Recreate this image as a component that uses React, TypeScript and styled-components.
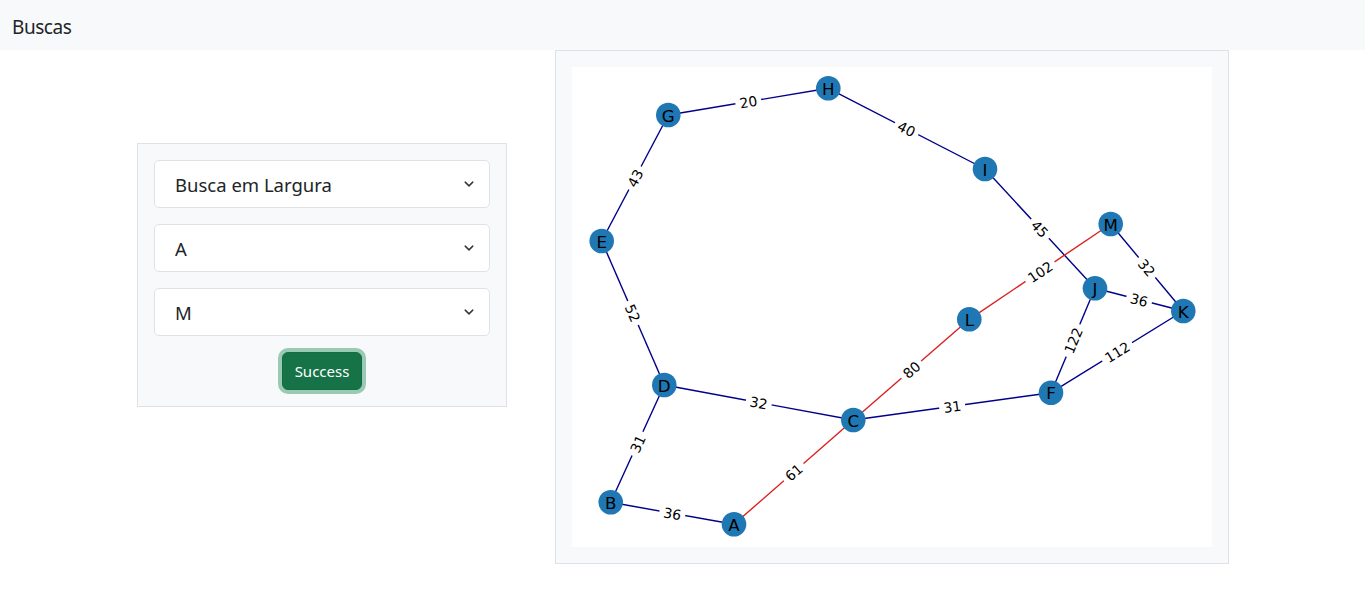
import React from "react";
import styled, { createGlobalStyle } from "styled-components";

const GlobalStyle = createGlobalStyle`
  html, body { margin: 0; padding: 0; background: #fff; }
  body { font-family: "Noto Sans", "Open Sans", sans-serif; color: #212529; }
  * { box-sizing: border-box; }
`;

const NavBar = styled.nav`
  height: 50px;
  background: #f8f9fa;
  display: flex;
  align-items: center;
  padding: 5px 12px 0;
`;

const Brand = styled.span`
  font-size: 19px;
  letter-spacing: -0.45px;
  line-height: 1;
  color: #212529;
`;

const Main = styled.main`
  display: flex;
  align-items: flex-start;
  padding-left: 137px;
`;

const ControlCard = styled.form`
  width: 370px;
  margin-top: 93px;
  padding: 16px;
  background: #f8f9fa;
  border: 1px solid #dee2e6;
  display: flex;
  flex-direction: column;
  gap: 16px;
`;

const SelectWrap = styled.div`
  position: relative;
  height: 48px;
`;

const Select = styled.select`
  appearance: none;
  -webkit-appearance: none;
  width: 100%;
  height: 48px;
  padding: 0 40px 0 20px;
  font-family: "Noto Sans", "Open Sans", sans-serif;
  font-size: 18.5px;
  color: #212529;
  background: #fff;
  border: 1px solid #dee2e6;
  border-radius: 5px;
  outline: none;
`;

const Chevron = styled.svg`
  position: absolute;
  right: 15px;
  top: 18px;
  pointer-events: none;
`;

const SubmitButton = styled.button`
  align-self: center;
  height: 38px;
  padding: 0 12px;
  background: #157347;
  color: #fff;
  border: 1px solid #146c43;
  border-radius: 6px;
  font-family: "Noto Sans", "Open Sans", sans-serif;
  font-size: 15px;
  box-shadow: 0 0 0 4px rgba(60, 153, 110, 0.5);
`;

const GraphPanel = styled.section`
  margin-left: 48px;
  width: 674px;
  padding: 16px;
  background: #f8f9fa;
  border: 1px solid #dee2e6;
`;

const GraphCanvas = styled.svg`
  display: block;
  background: #fff;
`;

type Node = { id: string; x: number; y: number };
type Edge = { a: string; b: string; w: number; path?: boolean };

const nodes: Node[] = [
  { id: "A", x: 162, y: 457.3 },
  { id: "B", x: 38.7, y: 435.3 },
  { id: "C", x: 281.3, y: 353 },
  { id: "D", x: 92.3, y: 318 },
  { id: "E", x: 29.7, y: 174 },
  { id: "F", x: 479, y: 325.7 },
  { id: "G", x: 96.3, y: 48 },
  { id: "H", x: 256.3, y: 21.3 },
  { id: "I", x: 413, y: 102 },
  { id: "J", x: 523, y: 221.3 },
  { id: "K", x: 611.3, y: 244 },
  { id: "L", x: 397.3, y: 252.3 },
  { id: "M", x: 538.7, y: 157 },
];

const edges: Edge[] = [
  { a: "G", b: "H", w: 20 },
  { a: "H", b: "I", w: 40 },
  { a: "I", b: "J", w: 45 },
  { a: "E", b: "G", w: 43 },
  { a: "E", b: "D", w: 52 },
  { a: "D", b: "C", w: 32 },
  { a: "D", b: "B", w: 31 },
  { a: "B", b: "A", w: 36 },
  { a: "A", b: "C", w: 61, path: true },
  { a: "C", b: "L", w: 80, path: true },
  { a: "L", b: "M", w: 102, path: true },
  { a: "C", b: "F", w: 31 },
  { a: "F", b: "J", w: 122 },
  { a: "F", b: "K", w: 112 },
  { a: "J", b: "K", w: 36 },
  { a: "M", b: "K", w: 32 },
];

const byId = Object.fromEntries(nodes.map((n) => [n.id, n]));

function labelAngle(a: Node, b: Node) {
  let deg = (Math.atan2(b.y - a.y, b.x - a.x) * 180) / Math.PI;
  if (deg > 90) deg -= 180;
  if (deg <= -90) deg += 180;
  return deg;
}

const Graph: React.FC = () => (
  <GraphCanvas width={640} height={480} viewBox="0 0 640 480">
    {edges.map((e) => {
      const a = byId[e.a];
      const b = byId[e.b];
      return (
        <line
          key={`l-${e.a}${e.b}`}
          x1={a.x}
          y1={a.y}
          x2={b.x}
          y2={b.y}
          stroke={e.path ? "#dc1f1f" : "#00008b"}
          strokeWidth={1.4}
        />
      );
    })}
    {edges.map((e) => {
      const a = byId[e.a];
      const b = byId[e.b];
      const mx = (a.x + b.x) / 2;
      const my = (a.y + b.y) / 2;
      const txt = String(e.w);
      const w = txt.length * 8.85 + 8.4;
      return (
        <g key={`t-${e.a}${e.b}`} transform={`translate(${mx} ${my}) rotate(${labelAngle(a, b)})`}>
          <rect x={-w / 2} y={-11} width={w} height={22} rx={4} fill="#fff" />
          <text
            x={0}
            y={0.5}
            textAnchor="middle"
            dominantBaseline="central"
            fontFamily="'DejaVu Sans', sans-serif"
            fontSize={13.9}
            fill="#000"
          >
            {txt}
          </text>
        </g>
      );
    })}
    {nodes.map((n) => (
      <g key={n.id}>
        <circle cx={n.x} cy={n.y} r={12.3} fill="#1f78b4" />
        <text
          x={n.x}
          y={n.y + 0.5}
          textAnchor="middle"
          dominantBaseline="central"
          fontFamily="'DejaVu Sans', sans-serif"
          fontSize={16.7}
          fill="#000"
        >
          {n.id}
        </text>
      </g>
    ))}
  </GraphCanvas>
);

const ChevronIcon: React.FC = () => (
  <Chevron width={12} height={12} viewBox="0 0 16 16">
    <path d="M3 5.5l5 5 5-5" fill="none" stroke="#343a40" strokeWidth={2} strokeLinecap="round" strokeLinejoin="round" />
  </Chevron>
);

const SelectField: React.FC<{ value: string; options: string[] }> = ({ value, options }) => (
  <SelectWrap>
    <Select defaultValue={value}>
      {options.map((o) => (
        <option key={o} value={o}>
          {o}
        </option>
      ))}
    </Select>
    <ChevronIcon />
  </SelectWrap>
);

const letters = "ABCDEFGHIJKLM".split("");

export default function App() {
  return (
    <>
      <GlobalStyle />
      <NavBar>
        <Brand>Buscas</Brand>
      </NavBar>
      <Main>
        <ControlCard onSubmit={(e) => e.preventDefault()}>
          <SelectField value="Busca em Largura" options={["Busca em Largura", "Busca em Profundidade", "Busca de Custo Uniforme", "Busca A*"]} />
          <SelectField value="A" options={letters} />
          <SelectField value="M" options={letters} />
          <SubmitButton type="submit">Success</SubmitButton>
        </ControlCard>
        <GraphPanel>
          <Graph />
        </GraphPanel>
      </Main>
    </>
  );
}
